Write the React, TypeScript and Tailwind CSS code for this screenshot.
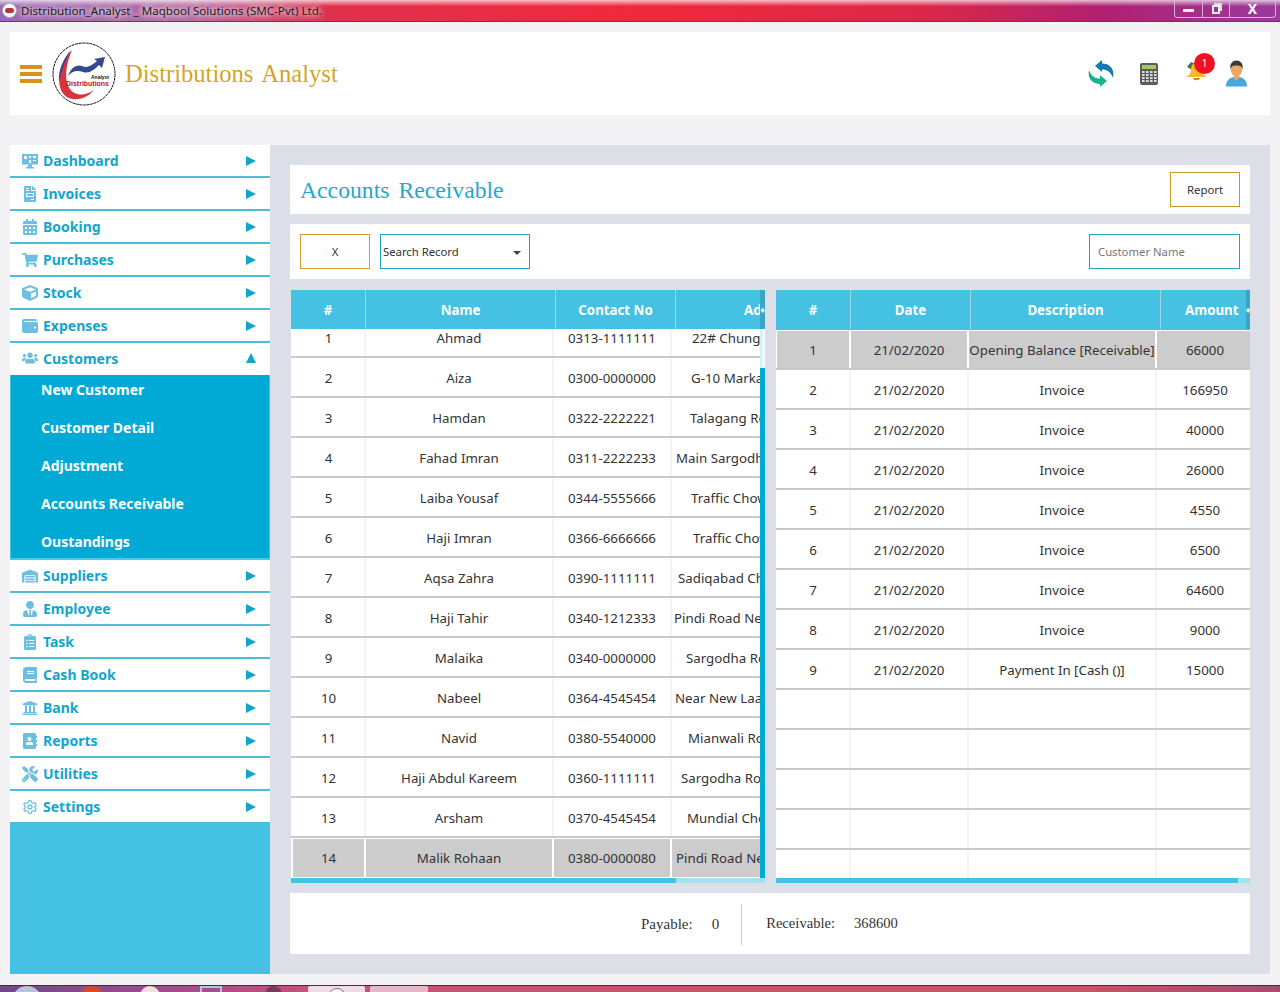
import type { ReactNode } from 'react'
import {
  FaFileInvoice, FaCalendarAlt, FaShoppingCart, FaCube, FaWallet, FaUsers, FaWarehouse,
  FaUserTie, FaClipboardList, FaBook, FaUniversity, FaAddressBook, FaTools,
} from 'react-icons/fa'
import { Settings } from 'lucide-react'

function MonitorIcon() {
  return (
    <svg width="16" height="16" viewBox="0 0 16 16" fill="currentColor">
      <path d="M0 1h16v10.5H0z" />
      <path d="M2 3h3v3H2zM7 3h2v2H7zM11 3h3v2h-3zM7 7h2v3H7zM11 7h3v1h-3z" fill="#fff" />
      <path d="M6 11.5h4V14h2v1.5H4V14h2z" />
    </svg>
  )
}

const MENU_TOP = [
  { label: 'Dashboard', icon: <MonitorIcon /> },
  { label: 'Invoices', icon: <FaFileInvoice /> },
  { label: 'Booking', icon: <FaCalendarAlt /> },
  { label: 'Purchases', icon: <FaShoppingCart /> },
  { label: 'Stock', icon: <FaCube /> },
  { label: 'Expenses', icon: <FaWallet /> },
]

const MENU_BOTTOM = [
  { label: 'Suppliers', icon: <FaWarehouse /> },
  { label: 'Employee', icon: <FaUserTie /> },
  { label: 'Task', icon: <FaClipboardList /> },
  { label: 'Cash Book', icon: <FaBook /> },
  { label: 'Bank', icon: <FaUniversity /> },
  { label: 'Reports', icon: <FaAddressBook /> },
  { label: 'Utilities', icon: <FaTools /> },
  { label: 'Settings', icon: <Settings size={16} strokeWidth={2} /> },
]

const SUB_MENU = ['New Customer', 'Customer Detail', 'Adjustment', 'Accounts Receivable', 'Oustandings']

const CUSTOMERS = [
  { name: 'Ahmad', phone: '0313-1111111', address: '22# Chung Lahore', pad: 'pl-[20px]' },
  { name: 'Aiza', phone: '0300-0000000', address: 'G-10 Markaz', pad: 'pl-[19px]' },
  { name: 'Hamdan', phone: '0322-2222221', address: 'Talagang Road', pad: 'pl-[18px]' },
  { name: 'Fahad Imran', phone: '0311-2222233', address: 'Main Sargodha', pad: 'pl-[4px]' },
  { name: 'Laiba Yousaf', phone: '0344-5555666', address: 'Traffic Chowk', pad: 'pl-[19px]' },
  { name: 'Haji Imran', phone: '0366-6666666', address: 'Traffic Chowk', pad: 'pl-[21px]' },
  { name: 'Aqsa Zahra', phone: '0390-1111111', address: 'Sadiqabad Chowk', pad: 'pl-[6px]' },
  { name: 'Haji Tahir', phone: '0340-1212333', address: 'Pindi Road New', pad: 'pl-[2px]' },
  { name: 'Malaika', phone: '0340-0000000', address: 'Sargodha Road', pad: 'pl-[14px]' },
  { name: 'Nabeel', phone: '0364-4545454', address: 'Near New Laari', pad: 'pl-[3px]' },
  { name: 'Navid', phone: '0380-5540000', address: 'Mianwali Road', pad: 'pl-[16px]' },
  { name: 'Haji Abdul Kareem', phone: '0360-1111111', address: 'Sargodha Road', pad: 'pl-[9px]' },
  { name: 'Arsham', phone: '0370-4545454', address: 'Mundial Chowk', pad: 'pl-[15px]' },
  { name: 'Malik Rohaan', phone: '0380-0000080', address: 'Pindi Road New', pad: 'pl-[4px]' },
]

const LEDGER = [
  { desc: 'Opening Balance [Receivable]', amount: '66000' },
  { desc: 'Invoice', amount: '166950' },
  { desc: 'Invoice', amount: '40000' },
  { desc: 'Invoice', amount: '26000' },
  { desc: 'Invoice', amount: '4550' },
  { desc: 'Invoice', amount: '6500' },
  { desc: 'Invoice', amount: '64600' },
  { desc: 'Invoice', amount: '9000' },
  { desc: 'Payment In [Cash ()]', amount: '15000' },
]

function MenuRow({ label, icon, open }: { label: string; icon: ReactNode; open?: boolean }) {
  return (
    <div className={`flex items-center bg-white pl-[12px] pr-[14px] ${open ? 'h-[32px] pb-[2px]' : 'h-[33px] border-b-2 border-[#4fbcd9]'}`}>
      <span className="w-[20px] text-[16px] text-[#6cbfe0] flex justify-start">{icon}</span>
      <span className="ml-[1px] text-[14px] font-bold text-[#12a5cd]">{label}</span>
      {open ? (
        <span className="ml-auto w-0 h-0 border-x-[5.5px] border-x-transparent border-b-[10px] border-b-[#12a5cd]" />
      ) : (
        <span className="ml-auto w-0 h-0 border-y-[5px] border-y-transparent border-l-[10px] border-l-[#12a5cd]" />
      )}
    </div>
  )
}

function Sidebar() {
  return (
    <aside className="w-[260px] flex flex-col bg-[#45c1e3]">
      {MENU_TOP.map(m => <MenuRow key={m.label} {...m} />)}
      <MenuRow label="Customers" icon={<FaUsers />} open />
      <div className="h-[183px] overflow-hidden bg-[#00aad4] mx-[1px] flex flex-col gap-[7px]">
        {SUB_MENU.map(s => (
          <div key={s} className="h-[31px] shrink-0 flex items-center pb-[2px] pl-[30px] text-[14px] font-bold text-white">{s}</div>
        ))}
      </div>
      <div className="h-[2px] bg-[#4fc8e3]" />
      {MENU_BOTTOM.map(m => <MenuRow key={m.label} {...m} />)}
    </aside>
  )
}

function HeadCell({ className, children }: { className: string; children: ReactNode }) {
  return (
    <div className={`h-full flex items-center justify-center pt-[2px] border-r border-[#9cd6e8] text-[13.3px] font-bold text-white ${className}`}>
      {children}
    </div>
  )
}

function CustomerTable() {
  return (
    <div className="w-[474px] flex flex-col bg-white">
      <div className="h-[39px] shrink-0 flex bg-[#45c1e3]">
        <HeadCell className="w-[75px]">#</HeadCell>
        <HeadCell className="w-[190px]">Name</HeadCell>
        <HeadCell className="w-[120px]">Contact No</HeadCell>
        <div className="w-[84px] h-full overflow-hidden flex items-center pt-[2px] pl-[68px] text-[13.3px] font-bold text-white whitespace-nowrap">Ad</div>
        <div className="w-[5px] bg-[#3da5c4] flex items-center justify-center text-[9px] text-white overflow-hidden">♦</div>
      </div>
      <div className="flex flex-1 min-h-0">
        <div className="w-[469px] overflow-hidden">
          <div className="-mt-[11px]">
            {CUSTOMERS.map((c, i) => {
              const sel = i === CUSTOMERS.length - 1
              const cell = `h-full flex items-center border-r-2 ${sel ? 'bg-[#cdcccd] border-white' : 'border-[#f3f3f6]'}`
              return (
                <div key={c.phone + i} className={`h-[40px] flex pl-[2px] pt-[1px] text-[13.3px] leading-[20px] text-[#333] whitespace-nowrap bg-white ${sel ? 'border-b border-white' : 'border-b-2 border-[#c9c9c9]'}`}>
                  <div className={`${cell} w-[73px] justify-center`}>{i + 1}</div>
                  <div className={`${cell} w-[188px] justify-center`}>{c.name}</div>
                  <div className={`${cell} w-[118px] justify-center`}>{c.phone}</div>
                  <div className={`h-full flex items-center w-[88px] overflow-hidden ${sel ? 'bg-[#cdcccd]' : ''} ${c.pad}`}>{c.address}</div>
                </div>
              )
            })}
          </div>
        </div>
        <div className="w-[5px] flex flex-col">
          <div className="h-[39px] bg-gradient-to-r from-[#c8f0f8] to-white" />
          <div className="flex-1 bg-[#00aad4]" />
        </div>
      </div>
      <div className="h-[5px] shrink-0 flex bg-[#a5e0ee]">
        <div className="w-[385px] bg-[#45c1e3]" />
      </div>
    </div>
  )
}

function LedgerTable() {
  const rows = Array.from({ length: 14 }, (_, i) => LEDGER[i])
  return (
    <div className="w-[474px] flex flex-col bg-white">
      <div className="h-[40px] shrink-0 flex pb-[1px] bg-[#45c1e3]">
        <HeadCell className="w-[75px]">#</HeadCell>
        <HeadCell className="w-[120px]">Date</HeadCell>
        <HeadCell className="w-[190px]">Description</HeadCell>
        <div className="w-[85px] h-full overflow-hidden flex items-center pt-[2px] pl-[24px] text-[13.3px] font-bold text-white whitespace-nowrap">Amount</div>
        <div className="w-[4px] bg-[#3da5c4] flex items-center justify-center text-[9px] text-white overflow-hidden">♦</div>
      </div>
      <div className="flex-1 min-h-0 overflow-hidden">
        {rows.map((r, i) => {
          const sel = i === 0
          const cell = `h-full flex items-center justify-center border-r-2 ${sel ? 'bg-[#cdcccd] border-white' : 'border-[#f3f3f6]'}`
          return (
            <div key={i} className="h-[40px] flex pl-[1px] pt-[1px] border-b-2 border-[#c9c9c9] text-[13.3px] leading-[20px] text-[#333] whitespace-nowrap bg-white">
              <div className={`${cell} w-[74px]`}>{r && i + 1}</div>
              <div className={`${cell} w-[118px]`}>{r && '21/02/2020'}</div>
              <div className={`${cell} w-[188px]`}>{r?.desc}</div>
              <div className={`h-full flex items-center justify-center flex-1 pl-[3px] ${sel ? 'bg-[#cdcccd]' : ''}`}>{r?.amount}</div>
            </div>
          )
        })}
      </div>
      <div className="h-[5px] shrink-0 flex bg-[#a5e0ee]">
        <div className="w-[462px] bg-[#45c1e3]" />
      </div>
    </div>
  )
}

function Logo() {
  return (
    <svg width="64" height="64" viewBox="0 0 64 64" className="shrink-0">
      <circle cx="32" cy="32" r="31" fill="#fff" stroke="#111" strokeWidth="1" strokeDasharray="3 0.6" />
      <path d="M20 8 C8 20 4 38 10 50 C16 60 32 60 42 48 C32 55 21 54 16 44 C12 34 15 20 20 8Z" fill="#d8343c" />
      <path d="M19 8 C10 18 6 30 7 40 C9 30 13 18 19 8Z" fill="#2f4a8c" />
      <path d="M16 34 C19 25 25 22 30 24 C36 27 41 22 45 19 L42 17 L53 15 L50 26 L47 23 C42 28 37 32 31 30 C25 28 20 29 16 34Z" fill="#34488f" />
      <text x="39" y="37" fontSize="6" fontWeight="700" fill="#111" fontFamily="'Liberation Sans', sans-serif" textLength="18" lengthAdjust="spacingAndGlyphs">Analyst</text>
      <text x="14" y="44" fontSize="7.5" fontWeight="700" fill="#c1121f" fontFamily="'Liberation Sans', sans-serif" textLength="43" lengthAdjust="spacingAndGlyphs">Distributions</text>
    </svg>
  )
}

function RefreshIcon() {
  return (
    <svg width="28" height="28" viewBox="0 0 28 28">
      <path d="M8 6 L15 0 L15 3.5 C22 3.5 28 8 26 18 C24 12 20 9.5 15 9.5 L15 12 Z" fill="#1478b4" />
      <path d="M20 21 L13 27 L13 24 C6 24 0 19 2 10 C4 16 8 18.5 13 18.5 L13 15 Z" fill="#18b48c" />
    </svg>
  )
}

function CalculatorIcon() {
  return (
    <svg width="18" height="22" viewBox="0 0 18 22">
      <rect width="18" height="22" rx="2" fill="#5c5c5c" />
      <rect x="2" y="2" width="14" height="4" fill="#a4c95a" />
      {[8, 11, 14, 17].map(y => [2, 6, 10, 14].map(x => (
        <rect key={`${x}-${y}`} x={x} y={y} width="2.6" height="2" fill="#d9d9d9" />
      )))}
    </svg>
  )
}

function BellIcon() {
  return (
    <div className="relative w-[30px] h-[30px] -mt-[12px]">
      <svg width="24" height="26" viewBox="0 0 24 26" className="absolute left-0 top-[6px]">
        <path d="M2 8 L6 3 L11 5 L9 12Z" fill="#3f7d3a" />
        <path d="M11 4 C16 4 17 8 17 12 C17 15 20 16 21 18 L2 18 C3 16 6 15 6 12 C6 8 7 4 11 4Z" fill="#f5b921" />
        <path d="M8 19 L15 19 C15 22 8 22 8 19Z" fill="#c98a12" />
      </svg>
      <span className="absolute right-0 top-0 w-[21px] h-[21px] rounded-full bg-[#f01020] text-white text-[10px] flex items-center justify-center">1</span>
    </div>
  )
}

function UserIcon() {
  return (
    <svg width="21" height="27" viewBox="0 0 22 27">
      <path d="M0 27 C0 20 5 17 11 17 C17 17 22 20 22 27Z" fill="#46a8e0" />
      <path d="M8 14 L14 14 L14 18 L11 21 L8 18Z" fill="#e8a868" />
      <ellipse cx="11" cy="9" rx="6" ry="7.5" fill="#f0a860" />
      <path d="M4.5 9 C4 3 7 0 11 0 C15 0 18 3 17.5 9 C16 5 14 5 11 5 C8 5 6 5 4.5 9Z" fill="#3a3a3a" />
    </svg>
  )
}

function TitleBar() {
  return (
    <div className="h-[22px] shrink-0 flex items-start border-b border-[#8c2a4a] bg-[linear-gradient(to_bottom,rgba(255,255,255,0.7),rgba(255,255,255,0)_30%),linear-gradient(to_right,#9a68b4_0%,#b86aa0_15%,#e0304c_26%,#f0283c_50%,#dc2848_72%,#b02070_86%,#9a3a9c_100%)]">
      <span className="ml-[2px] mt-[3px] w-[15px] h-[15px] rounded-full bg-white border border-[#aaa] flex items-center justify-center">
        <span className="w-[9px] h-[5px] rounded-full bg-[#c0303c]" />
      </span>
      <span className="ml-[4px] text-[11.6px] leading-[22px] text-[#1c1c1c] whitespace-nowrap [text-shadow:0_0_6px_#fff,0_0_6px_#fff]">
        Distribution_Analyst _ Maqbool Solutions (SMC-Pvt) Ltd.
      </span>
      <div className="ml-auto mr-[4px] h-[18px] w-[102px] flex border border-t-0 border-[#d8b0dc] rounded-b-[4px]">
        <div className="w-[28px] flex items-center justify-center border-r border-[#d8b0dc]">
          <span className="w-[11px] h-[3px] bg-[#eee] mt-[3px]" />
        </div>
        <div className="w-[27px] flex items-center justify-center border-r border-[#d8b0dc]">
          <span className="relative w-[8px] h-[9px] mt-[2px] border-2 border-[#eee]">
            <span className="absolute -right-[4px] -top-[4px] w-[8px] h-[8px] border-t-2 border-r-2 border-[#ddd]" />
          </span>
        </div>
        <div className="flex-1 flex items-center justify-center text-[14px] font-bold text-white leading-[16px]">X</div>
      </div>
    </div>
  )
}

function TaskBar() {
  return (
    <div className="h-[7px] shrink-0 overflow-hidden flex items-start border-t border-[#4a2a3a] bg-[linear-gradient(to_right,#6e4a88_0%,#a04a90_12%,#c8507a_24%,#cf4f68_60%,#cf4f68_85%,#a84a70_100%)]">
      <span className="ml-[12px] w-[30px] h-[30px] rounded-full bg-[#b8c4d8] shrink-0" />
      <span className="ml-[38px] w-[24px] h-[24px] rounded-full bg-[#d84a2a] shrink-0" />
      <span className="ml-[36px] w-[20px] h-[20px] rounded-full bg-[#f0e0e0] shrink-0" />
      <span className="ml-[40px] w-[22px] h-[20px] border-2 border-[#a8c8e8] shrink-0" />
      <span className="ml-[43px] w-[17px] h-[20px] rounded-full bg-[#7a3a5a] shrink-0" />
      <span className="ml-[26px] w-[57px] h-[20px] rounded-t-[2px] bg-[#f2dce4] shrink-0 flex justify-center">
        <span className="mt-[2px] w-[18px] h-[18px] rounded-full bg-white border border-[#777]" />
      </span>
      <span className="ml-[5px] w-[58px] h-[20px] rounded-t-[2px] bg-[#e8b8c8] shrink-0" />
    </div>
  )
}

export default function App() {
  return (
    <div className="w-[1280px] h-[992px] overflow-hidden flex flex-col bg-[#f3f3f6] font-['Noto_Sans',sans-serif]">
      <TitleBar />

      {/* Header */}
      <header className="mt-[10px] mx-[10px] h-[83px] shrink-0 flex items-center bg-white pl-[10px] pr-[23px]">
        <div className="w-[22px] flex flex-col gap-[3px]">
          <span className="h-[4px] bg-[#dc8f1a]" />
          <span className="h-[4px] bg-[#dc8f1a]" />
          <span className="h-[4px] bg-[#dc8f1a]" />
        </div>
        <div className="ml-[10px]"><Logo /></div>
        <h1 className="ml-[9px] mt-[2px] text-[24.6px] font-['Liberation_Serif',serif] [word-spacing:3px] text-[#d4a429]">Distributions Analyst</h1>
        <div className="ml-auto flex items-center">
          <RefreshIcon />
          <span className="ml-[25px]"><CalculatorIcon /></span>
          <span className="ml-[27px]"><BellIcon /></span>
          <span className="ml-[11px]"><UserIcon /></span>
        </div>
      </header>

      <div className="mt-[30px] mx-[10px] h-[829px] shrink-0 flex">
        <Sidebar />

        <main className="flex-1 bg-[#dcdfe7] px-[20px] pt-[20px]">
          <div className="h-[49px] flex items-center justify-between bg-white pl-[10px] pr-[10px]">
            <h2 className="mt-[2px] text-[23.7px] font-['Liberation_Serif',serif] [word-spacing:3px] text-[#1fa9cf]">Accounts Receivable</h2>
            <button className="w-[70px] h-[35px] border border-[#c9992f] text-[11.4px] text-[#333]">Report</button>
          </div>

          <div className="mt-[10px] h-[55px] flex items-center bg-white px-[10px] text-[11.3px]">
            <button className="w-[70px] h-[35px] pt-[1px] border border-[#dc9a2e] text-[#333]">X</button>
            <div className="ml-[10px] w-[150px] h-[35px] pt-[2px] border border-[#1fa3c9] flex items-center pl-[2px] pr-[8px] text-[#333]">
              Search Record
              <span className="ml-auto w-0 h-0 border-x-[4px] border-x-transparent border-t-[4px] border-t-[#444]" />
            </div>
            <div className="ml-auto w-[151px] h-[35px] pt-[2px] border border-[#1fa9bf] flex items-center pl-[8px] text-[#777]">Customer Name</div>
          </div>

          <div className="mt-[11px] h-[593px] pl-[1px] flex gap-[11px]">
            <CustomerTable />
            <LedgerTable />
          </div>

          <div className="mt-[10px] h-[61px] flex items-center pt-[1px] bg-white pl-[351px] font-['Liberation_Serif',serif] text-[15px] text-[#333]">
            <span>Payable:</span>
            <span className="ml-[19px]">0</span>
            <span className="ml-[22px] w-px h-[41px] bg-[#ccc]" />
            <span className="ml-[24px] text-[14.6px]">Receivable:</span>
            <span className="ml-[19px] text-[14.6px]">368600</span>
          </div>
        </main>
      </div>

      <div className="h-[11px] shrink-0" />
      <TaskBar />
    </div>
  )
}
